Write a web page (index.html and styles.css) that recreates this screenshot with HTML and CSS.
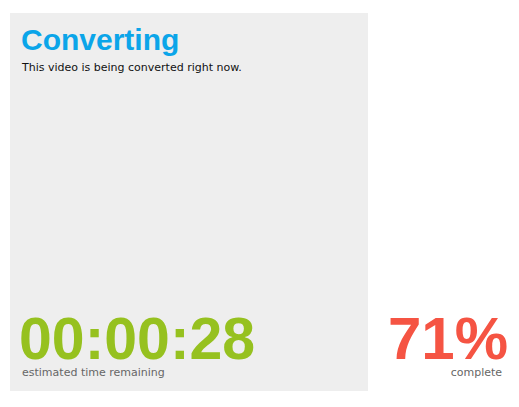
FILE: index.html
```html
<!DOCTYPE html>
<html>
<head>
<meta charset="utf-8">
<link rel="stylesheet" href="styles.css">
</head>
<body>
<div class="page">
  <div class="panel">
    <div class="head">
      <h1 class="title">Converting</h1>
      <p class="subtitle">This video is being converted right now.</p>
    </div>
    <div class="timer">
      <div class="time">00:00:28</div>
      <div class="label">estimated time remaining</div>
    </div>
  </div>
  <div class="progress">
    <div class="percent">71%</div>
    <div class="label label-right">complete</div>
  </div>
</div>
</body>
</html>
```

FILE: styles.css
```css
html, body {
  margin: 0;
  padding: 0;
  background: #ffffff;
}

.page {
  display: flex;
  align-items: flex-end;
  padding: 13px 0 0 10px;
}

.panel {
  width: 358px;
  height: 378px;
  box-sizing: border-box;
  background: #eeeeee;
  padding: 12px 12px 11px 12px;
  display: flex;
  flex-direction: column;
  justify-content: space-between;
}

.title {
  margin: 0 0 0 -1px;
  font-family: "Liberation Sans", Arial, sans-serif;
  font-weight: bold;
  font-size: 30px;
  line-height: 30px;
  color: #0ba5e9;
}

.subtitle {
  margin: 6px 0 0 0;
  font-family: "DejaVu Sans", Verdana, sans-serif;
  font-size: 11px;
  line-height: 14px;
  color: #111111;
}

.time,
.percent {
  font-family: "Liberation Sans", Arial, sans-serif;
  font-weight: bold;
  line-height: 54px;
}

.time {
  font-size: 59px;
  margin-left: -3px;
  color: #96c11f;
}

.percent {
  font-size: 60px;
  color: #f55443;
}

.label {
  font-family: "DejaVu Sans", Verdana, sans-serif;
  font-size: 11px;
  line-height: 14px;
  color: #666666;
}

.progress {
  margin-left: 20px;
  padding-bottom: 11px;
  display: flex;
  flex-direction: column;
  align-items: flex-end;
}

.label-right {
  margin-right: 6px;
}
```
